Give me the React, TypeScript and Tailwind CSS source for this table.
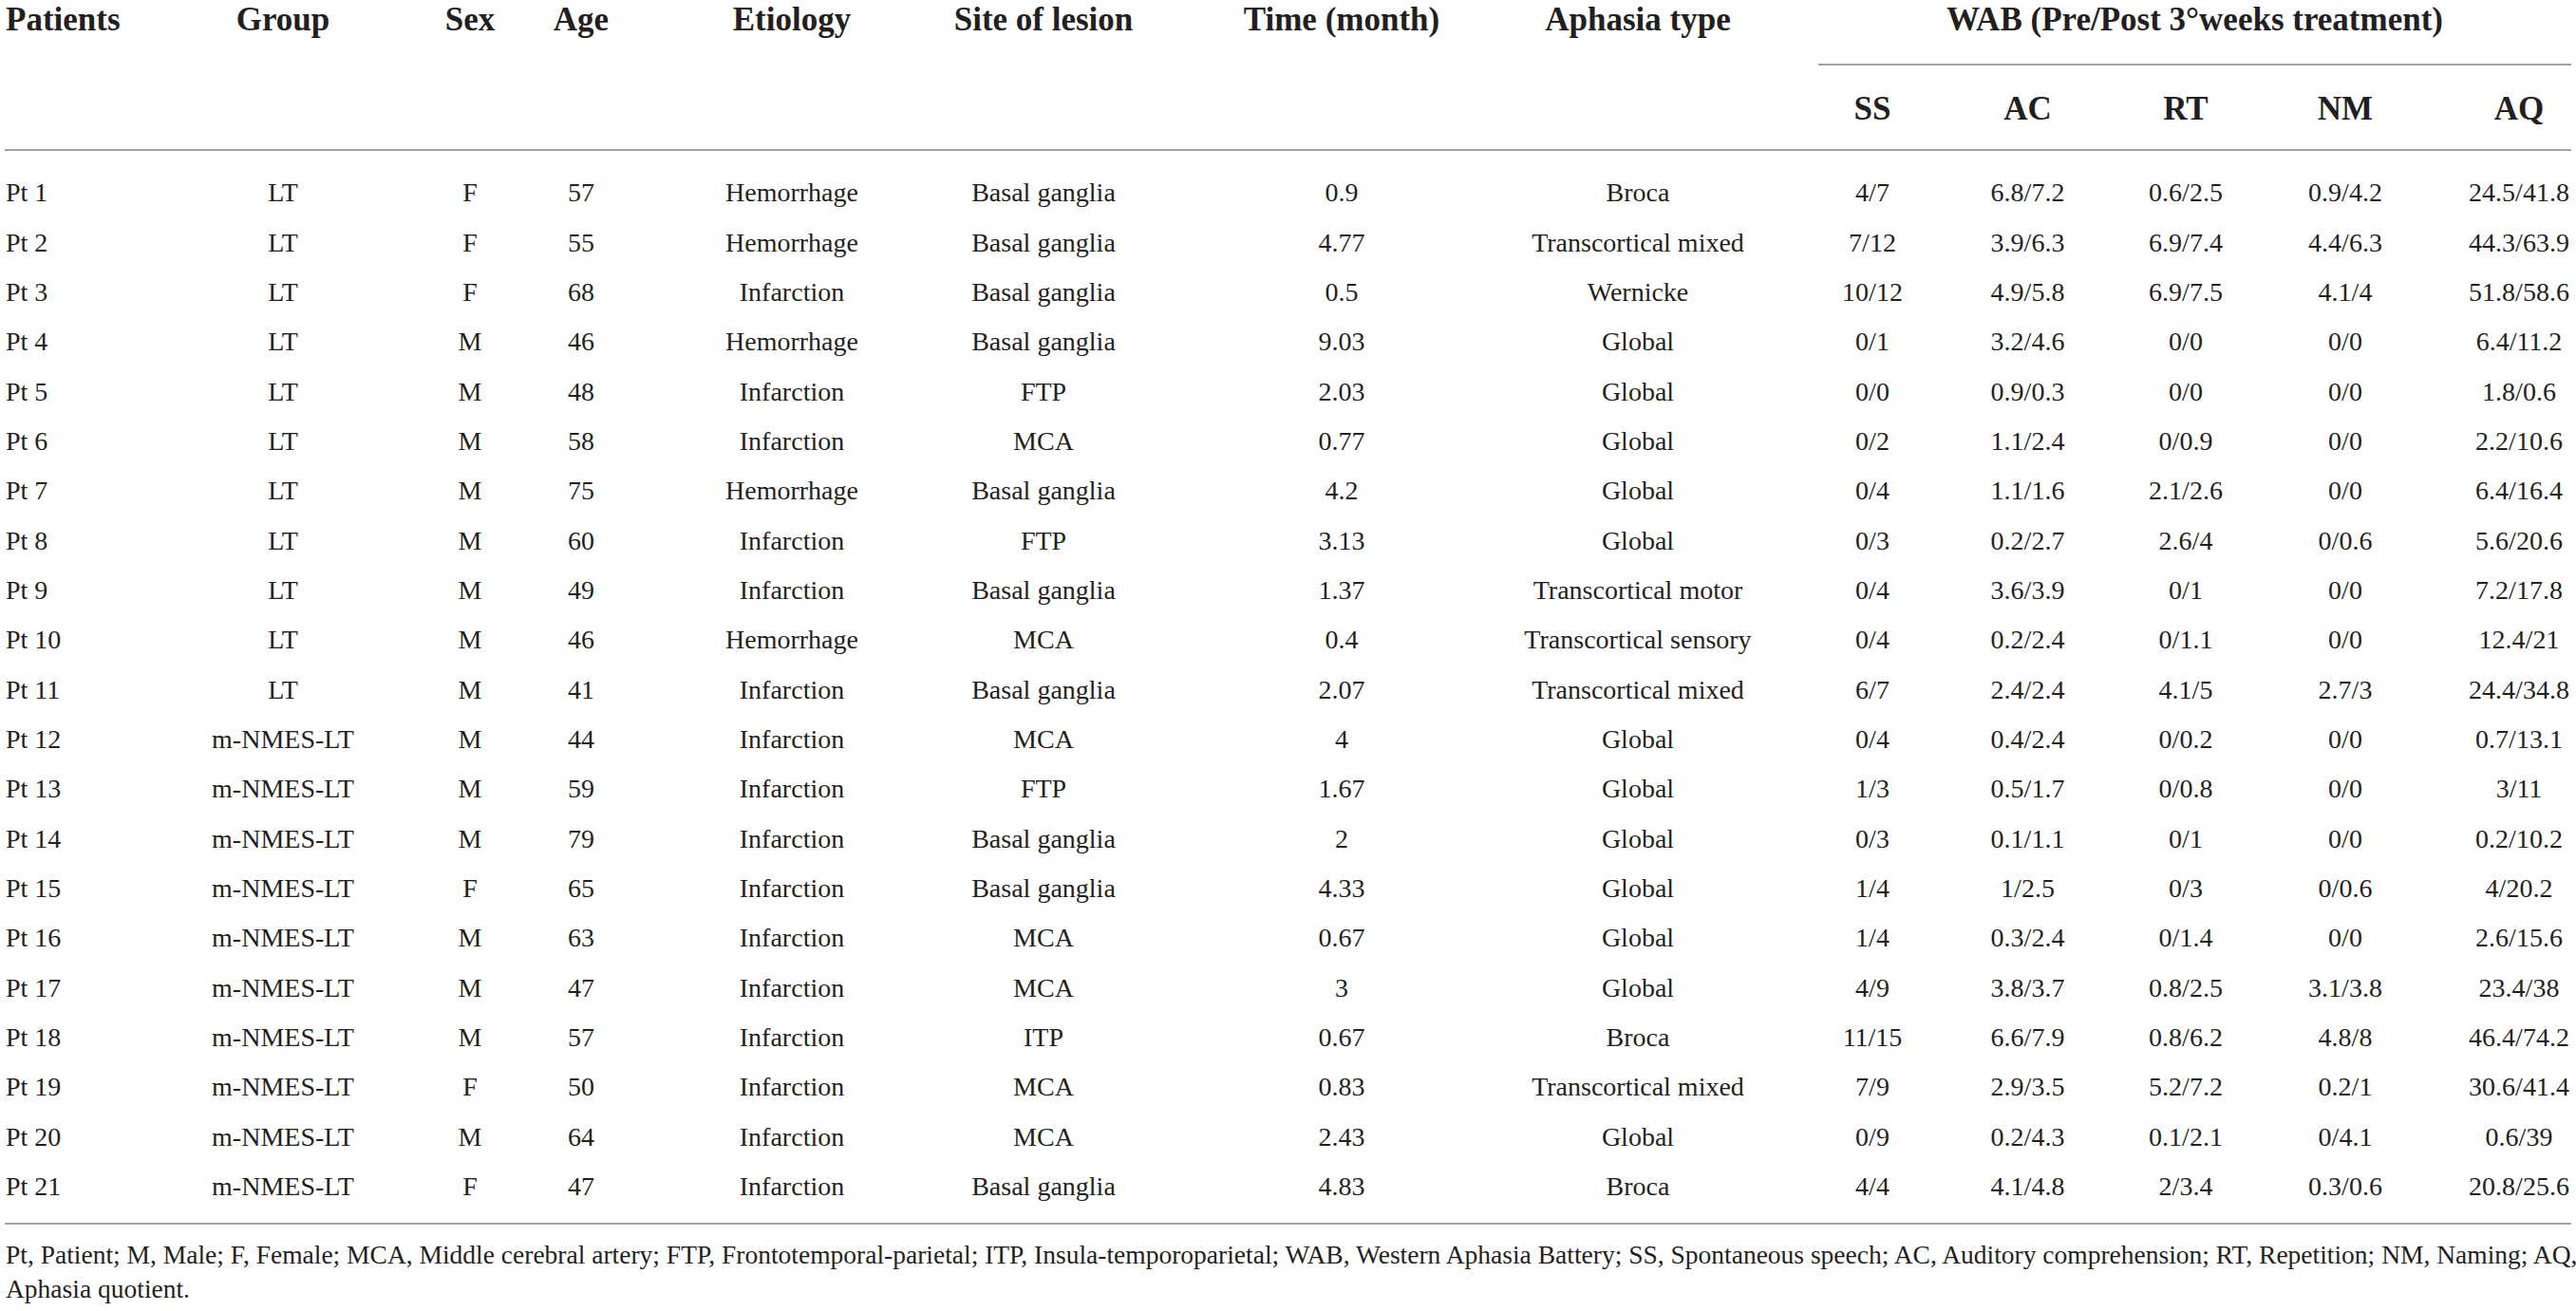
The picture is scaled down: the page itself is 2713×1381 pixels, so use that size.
import React from "react";

const COLS =
  "grid grid-cols-[175px_216px_157px_170px_243px_290px_314px_345px_138px_165px_168px_175px_147px]";

const CELL = [
  "flex justify-start pl-[1px]",
  "flex justify-center pl-[20px]",
  "flex justify-center pl-[41px]",
  "flex justify-center pr-[52px]",
  "flex justify-center pr-[21px]",
  "flex justify-center pr-[24px]",
  "flex justify-center",
  "flex justify-center pr-[35px]",
  "flex justify-center pr-[24px]",
  "flex justify-center",
  "flex justify-center",
  "flex justify-center pr-[7px]",
  "flex justify-center pl-[37px]",
];

const rows: string[][] = [
  ["Pt 1", "LT", "F", "57", "Hemorrhage", "Basal ganglia", "0.9", "Broca", "4/7", "6.8/7.2", "0.6/2.5", "0.9/4.2", "24.5/41.8"],
  ["Pt 2", "LT", "F", "55", "Hemorrhage", "Basal ganglia", "4.77", "Transcortical mixed", "7/12", "3.9/6.3", "6.9/7.4", "4.4/6.3", "44.3/63.9"],
  ["Pt 3", "LT", "F", "68", "Infarction", "Basal ganglia", "0.5", "Wernicke", "10/12", "4.9/5.8", "6.9/7.5", "4.1/4", "51.8/58.6"],
  ["Pt 4", "LT", "M", "46", "Hemorrhage", "Basal ganglia", "9.03", "Global", "0/1", "3.2/4.6", "0/0", "0/0", "6.4/11.2"],
  ["Pt 5", "LT", "M", "48", "Infarction", "FTP", "2.03", "Global", "0/0", "0.9/0.3", "0/0", "0/0", "1.8/0.6"],
  ["Pt 6", "LT", "M", "58", "Infarction", "MCA", "0.77", "Global", "0/2", "1.1/2.4", "0/0.9", "0/0", "2.2/10.6"],
  ["Pt 7", "LT", "M", "75", "Hemorrhage", "Basal ganglia", "4.2", "Global", "0/4", "1.1/1.6", "2.1/2.6", "0/0", "6.4/16.4"],
  ["Pt 8", "LT", "M", "60", "Infarction", "FTP", "3.13", "Global", "0/3", "0.2/2.7", "2.6/4", "0/0.6", "5.6/20.6"],
  ["Pt 9", "LT", "M", "49", "Infarction", "Basal ganglia", "1.37", "Transcortical motor", "0/4", "3.6/3.9", "0/1", "0/0", "7.2/17.8"],
  ["Pt 10", "LT", "M", "46", "Hemorrhage", "MCA", "0.4", "Transcortical sensory", "0/4", "0.2/2.4", "0/1.1", "0/0", "12.4/21"],
  ["Pt 11", "LT", "M", "41", "Infarction", "Basal ganglia", "2.07", "Transcortical mixed", "6/7", "2.4/2.4", "4.1/5", "2.7/3", "24.4/34.8"],
  ["Pt 12", "m-NMES-LT", "M", "44", "Infarction", "MCA", "4", "Global", "0/4", "0.4/2.4", "0/0.2", "0/0", "0.7/13.1"],
  ["Pt 13", "m-NMES-LT", "M", "59", "Infarction", "FTP", "1.67", "Global", "1/3", "0.5/1.7", "0/0.8", "0/0", "3/11"],
  ["Pt 14", "m-NMES-LT", "M", "79", "Infarction", "Basal ganglia", "2", "Global", "0/3", "0.1/1.1", "0/1", "0/0", "0.2/10.2"],
  ["Pt 15", "m-NMES-LT", "F", "65", "Infarction", "Basal ganglia", "4.33", "Global", "1/4", "1/2.5", "0/3", "0/0.6", "4/20.2"],
  ["Pt 16", "m-NMES-LT", "M", "63", "Infarction", "MCA", "0.67", "Global", "1/4", "0.3/2.4", "0/1.4", "0/0", "2.6/15.6"],
  ["Pt 17", "m-NMES-LT", "M", "47", "Infarction", "MCA", "3", "Global", "4/9", "3.8/3.7", "0.8/2.5", "3.1/3.8", "23.4/38"],
  ["Pt 18", "m-NMES-LT", "M", "57", "Infarction", "ITP", "0.67", "Broca", "11/15", "6.6/7.9", "0.8/6.2", "4.8/8", "46.4/74.2"],
  ["Pt 19", "m-NMES-LT", "F", "50", "Infarction", "MCA", "0.83", "Transcortical mixed", "7/9", "2.9/3.5", "5.2/7.2", "0.2/1", "30.6/41.4"],
  ["Pt 20", "m-NMES-LT", "M", "64", "Infarction", "MCA", "2.43", "Global", "0/9", "0.2/4.3", "0.1/2.1", "0/4.1", "0.6/39"],
  ["Pt 21", "m-NMES-LT", "F", "47", "Infarction", "Basal ganglia", "4.83", "Broca", "4/4", "4.1/4.8", "2/3.4", "0.3/0.6", "20.8/25.6"],
];

const mainHeads = ["Patients", "Group", "Sex", "Age", "Etiology", "Site of lesion", "Time (month)", "Aphasia type"];
const subHeads = ["SS", "AC", "RT", "NM", "AQ"];

export default function App() {
  return (
    <div className="min-h-screen w-[2713px] bg-white font-['Liberation_Serif',serif] text-[#231f20]">
      <div className="mx-[5px] w-[2703px]">
        {/* header */}
        <div className={`${COLS} grid-rows-[69px_88px] text-[35px] font-bold leading-[40px] whitespace-nowrap`}>
          {mainHeads.map((h, i) => (
            <div key={h} className={`${CELL[i]} row-span-2 items-start pt-[1px]`}>
              <span>{h}</span>
            </div>
          ))}
          <div className="col-span-5 flex justify-center border-b-2 border-[#a3a3a3] pt-[1px]">
            <span>WAB (Pre/Post 3°weeks treatment)</span>
          </div>
          {subHeads.map((h, i) => (
            <div key={h} className={`${CELL[i + 8]} items-start pt-[26px]`}>
              <span>{h}</span>
            </div>
          ))}
        </div>
        <div className="h-[2px] bg-[#a3a3a3]" />
        {/* body */}
        <div className="pt-[18px] pb-[12px] text-[28px] whitespace-nowrap">
          {rows.map((r) => (
            <div key={r[0]} className={`${COLS} h-[52.35px]`}>
              {r.map((c, i) => (
                <div key={i} className={`${CELL[i]} items-center`}>
                  <span>{c}</span>
                </div>
              ))}
            </div>
          ))}
        </div>
        <div className="h-[2px] bg-[#a3a3a3]" />
        <div className="pt-[14px] pl-[1px] text-[27.5px] leading-[36px] whitespace-nowrap">
          Pt, Patient; M, Male; F, Female; MCA, Middle cerebral artery; FTP, Frontotemporal-parietal; ITP, Insula-temporoparietal; WAB, Western Aphasia Battery; SS, Spontaneous speech; AC, Auditory comprehension; RT, Repetition; NM, Naming; AQ,
          <br />
          Aphasia quotient.
        </div>
      </div>
    </div>
  );
}
